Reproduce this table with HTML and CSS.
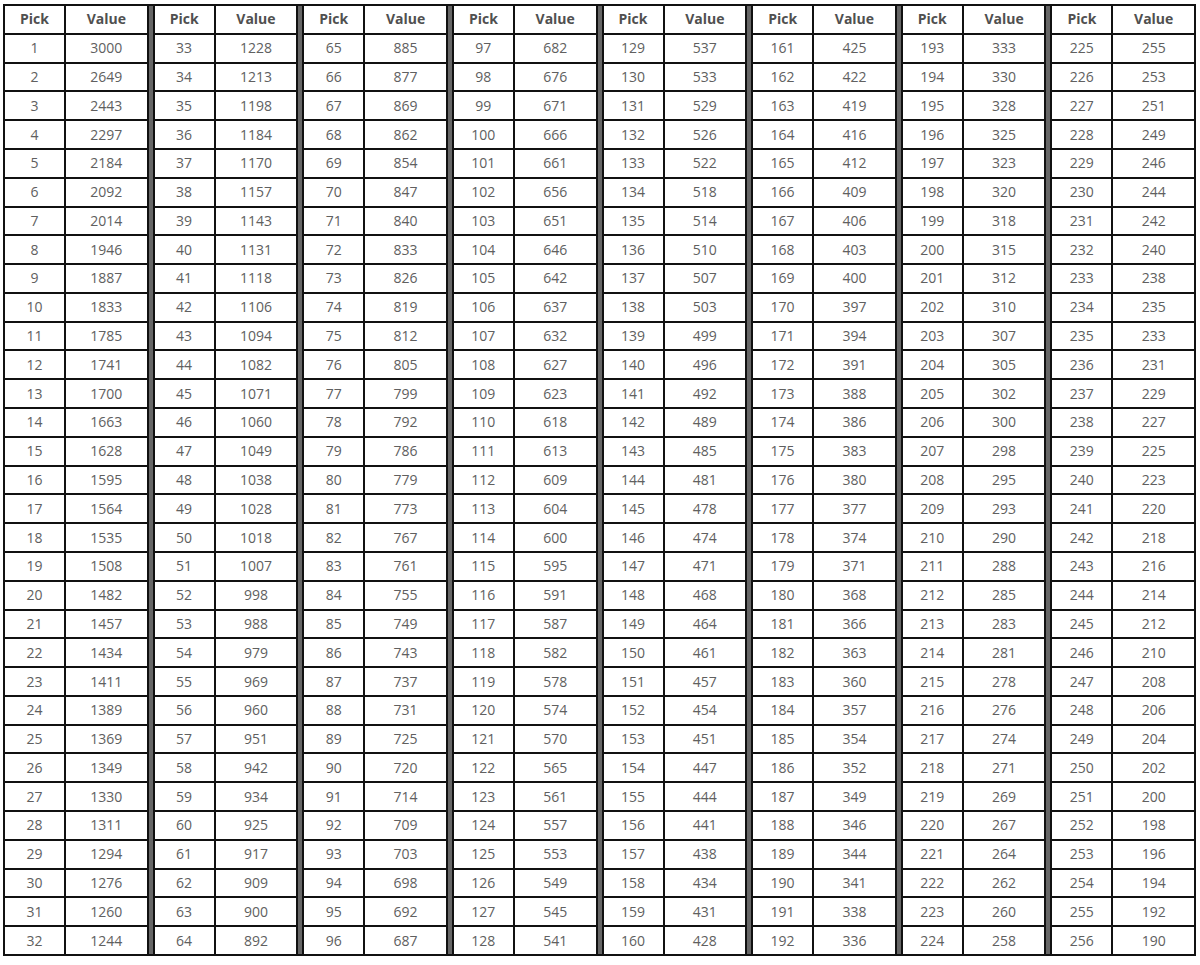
FILE: index.html
```html
<!DOCTYPE html>
<html>
<head>
<meta charset="utf-8">
<link rel="stylesheet" href="styles.css">
</head>
<body>
<div class="wrap">
<div class="tbl">
<div class="h">Pick</div><div class="h">Value</div>
<div class="c">1</div><div class="c">3000</div>
<div class="c">2</div><div class="c">2649</div>
<div class="c">3</div><div class="c">2443</div>
<div class="c">4</div><div class="c">2297</div>
<div class="c">5</div><div class="c">2184</div>
<div class="c">6</div><div class="c">2092</div>
<div class="c">7</div><div class="c">2014</div>
<div class="c">8</div><div class="c">1946</div>
<div class="c">9</div><div class="c">1887</div>
<div class="c">10</div><div class="c">1833</div>
<div class="c">11</div><div class="c">1785</div>
<div class="c">12</div><div class="c">1741</div>
<div class="c">13</div><div class="c">1700</div>
<div class="c">14</div><div class="c">1663</div>
<div class="c">15</div><div class="c">1628</div>
<div class="c">16</div><div class="c">1595</div>
<div class="c">17</div><div class="c">1564</div>
<div class="c">18</div><div class="c">1535</div>
<div class="c">19</div><div class="c">1508</div>
<div class="c">20</div><div class="c">1482</div>
<div class="c">21</div><div class="c">1457</div>
<div class="c">22</div><div class="c">1434</div>
<div class="c">23</div><div class="c">1411</div>
<div class="c">24</div><div class="c">1389</div>
<div class="c">25</div><div class="c">1369</div>
<div class="c">26</div><div class="c">1349</div>
<div class="c">27</div><div class="c">1330</div>
<div class="c">28</div><div class="c">1311</div>
<div class="c">29</div><div class="c">1294</div>
<div class="c">30</div><div class="c">1276</div>
<div class="c">31</div><div class="c">1260</div>
<div class="c">32</div><div class="c">1244</div>
</div>
<div class="tbl">
<div class="h">Pick</div><div class="h">Value</div>
<div class="c">33</div><div class="c">1228</div>
<div class="c">34</div><div class="c">1213</div>
<div class="c">35</div><div class="c">1198</div>
<div class="c">36</div><div class="c">1184</div>
<div class="c">37</div><div class="c">1170</div>
<div class="c">38</div><div class="c">1157</div>
<div class="c">39</div><div class="c">1143</div>
<div class="c">40</div><div class="c">1131</div>
<div class="c">41</div><div class="c">1118</div>
<div class="c">42</div><div class="c">1106</div>
<div class="c">43</div><div class="c">1094</div>
<div class="c">44</div><div class="c">1082</div>
<div class="c">45</div><div class="c">1071</div>
<div class="c">46</div><div class="c">1060</div>
<div class="c">47</div><div class="c">1049</div>
<div class="c">48</div><div class="c">1038</div>
<div class="c">49</div><div class="c">1028</div>
<div class="c">50</div><div class="c">1018</div>
<div class="c">51</div><div class="c">1007</div>
<div class="c">52</div><div class="c">998</div>
<div class="c">53</div><div class="c">988</div>
<div class="c">54</div><div class="c">979</div>
<div class="c">55</div><div class="c">969</div>
<div class="c">56</div><div class="c">960</div>
<div class="c">57</div><div class="c">951</div>
<div class="c">58</div><div class="c">942</div>
<div class="c">59</div><div class="c">934</div>
<div class="c">60</div><div class="c">925</div>
<div class="c">61</div><div class="c">917</div>
<div class="c">62</div><div class="c">909</div>
<div class="c">63</div><div class="c">900</div>
<div class="c">64</div><div class="c">892</div>
</div>
<div class="tbl">
<div class="h">Pick</div><div class="h">Value</div>
<div class="c">65</div><div class="c">885</div>
<div class="c">66</div><div class="c">877</div>
<div class="c">67</div><div class="c">869</div>
<div class="c">68</div><div class="c">862</div>
<div class="c">69</div><div class="c">854</div>
<div class="c">70</div><div class="c">847</div>
<div class="c">71</div><div class="c">840</div>
<div class="c">72</div><div class="c">833</div>
<div class="c">73</div><div class="c">826</div>
<div class="c">74</div><div class="c">819</div>
<div class="c">75</div><div class="c">812</div>
<div class="c">76</div><div class="c">805</div>
<div class="c">77</div><div class="c">799</div>
<div class="c">78</div><div class="c">792</div>
<div class="c">79</div><div class="c">786</div>
<div class="c">80</div><div class="c">779</div>
<div class="c">81</div><div class="c">773</div>
<div class="c">82</div><div class="c">767</div>
<div class="c">83</div><div class="c">761</div>
<div class="c">84</div><div class="c">755</div>
<div class="c">85</div><div class="c">749</div>
<div class="c">86</div><div class="c">743</div>
<div class="c">87</div><div class="c">737</div>
<div class="c">88</div><div class="c">731</div>
<div class="c">89</div><div class="c">725</div>
<div class="c">90</div><div class="c">720</div>
<div class="c">91</div><div class="c">714</div>
<div class="c">92</div><div class="c">709</div>
<div class="c">93</div><div class="c">703</div>
<div class="c">94</div><div class="c">698</div>
<div class="c">95</div><div class="c">692</div>
<div class="c">96</div><div class="c">687</div>
</div>
<div class="tbl">
<div class="h">Pick</div><div class="h">Value</div>
<div class="c">97</div><div class="c">682</div>
<div class="c">98</div><div class="c">676</div>
<div class="c">99</div><div class="c">671</div>
<div class="c">100</div><div class="c">666</div>
<div class="c">101</div><div class="c">661</div>
<div class="c">102</div><div class="c">656</div>
<div class="c">103</div><div class="c">651</div>
<div class="c">104</div><div class="c">646</div>
<div class="c">105</div><div class="c">642</div>
<div class="c">106</div><div class="c">637</div>
<div class="c">107</div><div class="c">632</div>
<div class="c">108</div><div class="c">627</div>
<div class="c">109</div><div class="c">623</div>
<div class="c">110</div><div class="c">618</div>
<div class="c">111</div><div class="c">613</div>
<div class="c">112</div><div class="c">609</div>
<div class="c">113</div><div class="c">604</div>
<div class="c">114</div><div class="c">600</div>
<div class="c">115</div><div class="c">595</div>
<div class="c">116</div><div class="c">591</div>
<div class="c">117</div><div class="c">587</div>
<div class="c">118</div><div class="c">582</div>
<div class="c">119</div><div class="c">578</div>
<div class="c">120</div><div class="c">574</div>
<div class="c">121</div><div class="c">570</div>
<div class="c">122</div><div class="c">565</div>
<div class="c">123</div><div class="c">561</div>
<div class="c">124</div><div class="c">557</div>
<div class="c">125</div><div class="c">553</div>
<div class="c">126</div><div class="c">549</div>
<div class="c">127</div><div class="c">545</div>
<div class="c">128</div><div class="c">541</div>
</div>
<div class="tbl">
<div class="h">Pick</div><div class="h">Value</div>
<div class="c">129</div><div class="c">537</div>
<div class="c">130</div><div class="c">533</div>
<div class="c">131</div><div class="c">529</div>
<div class="c">132</div><div class="c">526</div>
<div class="c">133</div><div class="c">522</div>
<div class="c">134</div><div class="c">518</div>
<div class="c">135</div><div class="c">514</div>
<div class="c">136</div><div class="c">510</div>
<div class="c">137</div><div class="c">507</div>
<div class="c">138</div><div class="c">503</div>
<div class="c">139</div><div class="c">499</div>
<div class="c">140</div><div class="c">496</div>
<div class="c">141</div><div class="c">492</div>
<div class="c">142</div><div class="c">489</div>
<div class="c">143</div><div class="c">485</div>
<div class="c">144</div><div class="c">481</div>
<div class="c">145</div><div class="c">478</div>
<div class="c">146</div><div class="c">474</div>
<div class="c">147</div><div class="c">471</div>
<div class="c">148</div><div class="c">468</div>
<div class="c">149</div><div class="c">464</div>
<div class="c">150</div><div class="c">461</div>
<div class="c">151</div><div class="c">457</div>
<div class="c">152</div><div class="c">454</div>
<div class="c">153</div><div class="c">451</div>
<div class="c">154</div><div class="c">447</div>
<div class="c">155</div><div class="c">444</div>
<div class="c">156</div><div class="c">441</div>
<div class="c">157</div><div class="c">438</div>
<div class="c">158</div><div class="c">434</div>
<div class="c">159</div><div class="c">431</div>
<div class="c">160</div><div class="c">428</div>
</div>
<div class="tbl">
<div class="h">Pick</div><div class="h">Value</div>
<div class="c">161</div><div class="c">425</div>
<div class="c">162</div><div class="c">422</div>
<div class="c">163</div><div class="c">419</div>
<div class="c">164</div><div class="c">416</div>
<div class="c">165</div><div class="c">412</div>
<div class="c">166</div><div class="c">409</div>
<div class="c">167</div><div class="c">406</div>
<div class="c">168</div><div class="c">403</div>
<div class="c">169</div><div class="c">400</div>
<div class="c">170</div><div class="c">397</div>
<div class="c">171</div><div class="c">394</div>
<div class="c">172</div><div class="c">391</div>
<div class="c">173</div><div class="c">388</div>
<div class="c">174</div><div class="c">386</div>
<div class="c">175</div><div class="c">383</div>
<div class="c">176</div><div class="c">380</div>
<div class="c">177</div><div class="c">377</div>
<div class="c">178</div><div class="c">374</div>
<div class="c">179</div><div class="c">371</div>
<div class="c">180</div><div class="c">368</div>
<div class="c">181</div><div class="c">366</div>
<div class="c">182</div><div class="c">363</div>
<div class="c">183</div><div class="c">360</div>
<div class="c">184</div><div class="c">357</div>
<div class="c">185</div><div class="c">354</div>
<div class="c">186</div><div class="c">352</div>
<div class="c">187</div><div class="c">349</div>
<div class="c">188</div><div class="c">346</div>
<div class="c">189</div><div class="c">344</div>
<div class="c">190</div><div class="c">341</div>
<div class="c">191</div><div class="c">338</div>
<div class="c">192</div><div class="c">336</div>
</div>
<div class="tbl">
<div class="h">Pick</div><div class="h">Value</div>
<div class="c">193</div><div class="c">333</div>
<div class="c">194</div><div class="c">330</div>
<div class="c">195</div><div class="c">328</div>
<div class="c">196</div><div class="c">325</div>
<div class="c">197</div><div class="c">323</div>
<div class="c">198</div><div class="c">320</div>
<div class="c">199</div><div class="c">318</div>
<div class="c">200</div><div class="c">315</div>
<div class="c">201</div><div class="c">312</div>
<div class="c">202</div><div class="c">310</div>
<div class="c">203</div><div class="c">307</div>
<div class="c">204</div><div class="c">305</div>
<div class="c">205</div><div class="c">302</div>
<div class="c">206</div><div class="c">300</div>
<div class="c">207</div><div class="c">298</div>
<div class="c">208</div><div class="c">295</div>
<div class="c">209</div><div class="c">293</div>
<div class="c">210</div><div class="c">290</div>
<div class="c">211</div><div class="c">288</div>
<div class="c">212</div><div class="c">285</div>
<div class="c">213</div><div class="c">283</div>
<div class="c">214</div><div class="c">281</div>
<div class="c">215</div><div class="c">278</div>
<div class="c">216</div><div class="c">276</div>
<div class="c">217</div><div class="c">274</div>
<div class="c">218</div><div class="c">271</div>
<div class="c">219</div><div class="c">269</div>
<div class="c">220</div><div class="c">267</div>
<div class="c">221</div><div class="c">264</div>
<div class="c">222</div><div class="c">262</div>
<div class="c">223</div><div class="c">260</div>
<div class="c">224</div><div class="c">258</div>
</div>
<div class="tbl">
<div class="h">Pick</div><div class="h">Value</div>
<div class="c">225</div><div class="c">255</div>
<div class="c">226</div><div class="c">253</div>
<div class="c">227</div><div class="c">251</div>
<div class="c">228</div><div class="c">249</div>
<div class="c">229</div><div class="c">246</div>
<div class="c">230</div><div class="c">244</div>
<div class="c">231</div><div class="c">242</div>
<div class="c">232</div><div class="c">240</div>
<div class="c">233</div><div class="c">238</div>
<div class="c">234</div><div class="c">235</div>
<div class="c">235</div><div class="c">233</div>
<div class="c">236</div><div class="c">231</div>
<div class="c">237</div><div class="c">229</div>
<div class="c">238</div><div class="c">227</div>
<div class="c">239</div><div class="c">225</div>
<div class="c">240</div><div class="c">223</div>
<div class="c">241</div><div class="c">220</div>
<div class="c">242</div><div class="c">218</div>
<div class="c">243</div><div class="c">216</div>
<div class="c">244</div><div class="c">214</div>
<div class="c">245</div><div class="c">212</div>
<div class="c">246</div><div class="c">210</div>
<div class="c">247</div><div class="c">208</div>
<div class="c">248</div><div class="c">206</div>
<div class="c">249</div><div class="c">204</div>
<div class="c">250</div><div class="c">202</div>
<div class="c">251</div><div class="c">200</div>
<div class="c">252</div><div class="c">198</div>
<div class="c">253</div><div class="c">196</div>
<div class="c">254</div><div class="c">194</div>
<div class="c">255</div><div class="c">192</div>
<div class="c">256</div><div class="c">190</div>
</div>
</div>
</body>
</html>
```

FILE: styles.css
```css
html, body {
  margin: 0;
  padding: 0;
  background: #ffffff;
}

.wrap {
  box-sizing: border-box;
  display: flex;
  gap: 4px;
  margin: 4px 0 0 3px;
  width: 1193px;
  height: 952px;
  background: #666666;
  border-top: 2px solid #111111;
  border-bottom: 2px solid #111111;
}

.tbl {
  flex: 1 1 0;
  display: grid;
  grid-template-columns: 59px 1fr;
  grid-template-rows: repeat(33, 1fr);
  gap: 2px;
  padding: 0 2px;
  background: #111111;
}

.h, .c {
  background: #ffffff;
  display: flex;
  align-items: center;
  justify-content: center;
  font-family: "Open Sans", "Noto Sans", sans-serif;
  font-size: 14px;
  line-height: 1;
}

.h {
  font-weight: 700;
  color: #505050;
}

.c {
  color: #606060;
}
```
